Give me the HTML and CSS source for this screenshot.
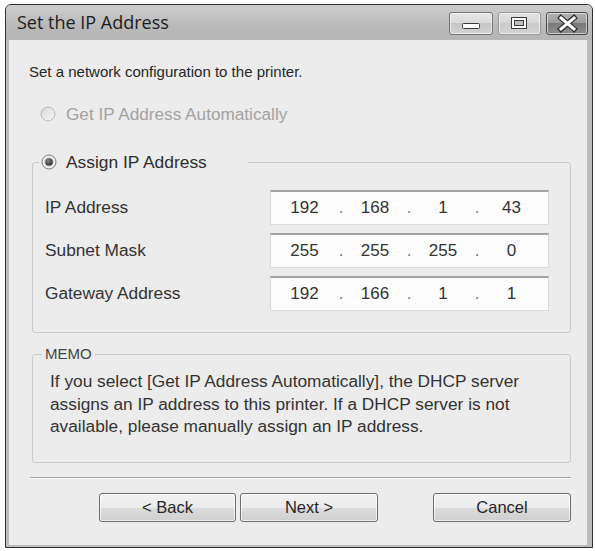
FILE: index.html
```html
<!DOCTYPE html>
<html>
<head>
<meta charset="utf-8">
<link rel="stylesheet" href="styles.css">
</head>
<body>
<div class="window">
  <div class="titlebar">
    <span class="title">Set the IP Address</span>
    <div class="caption">
      <div class="cbtn">
        <svg width="42" height="21" viewBox="0 0 42 21"><rect x="12.5" y="10.5" width="17" height="5" rx="1" fill="#fff" stroke="#3c3c3c"/></svg>
      </div>
      <div class="cbtn light">
        <svg width="41" height="21" viewBox="0 0 41 21"><rect x="12.5" y="4.5" width="15" height="11" fill="#fff" stroke="#3c3c3c"/><rect x="15.5" y="7.5" width="9" height="5" fill="#bdbdbd" stroke="#3c3c3c"/></svg>
      </div>
      <div class="cbtn close">
        <svg width="40" height="21" viewBox="0 0 40 21"><path d="M14 5 L27 16 M27 5 L14 16" stroke="#2e2e2e" stroke-width="5.5" stroke-linecap="square"/><path d="M14 5 L27 16 M27 5 L14 16" stroke="#fff" stroke-width="3" stroke-linecap="square"/></svg>
      </div>
    </div>
  </div>
  <div class="client">
    <div class="intro">Set a network configuration to the printer.</div>
    <div class="radio-row disabled">
      <svg class="radio" width="16" height="16" viewBox="0 0 16 16"><defs><linearGradient id="rd" x1="0" y1="0" x2="1" y2="1"><stop offset="0" stop-color="#d9d9d9"/><stop offset="1" stop-color="#f5f5f5"/></linearGradient></defs><circle cx="8" cy="8" r="7" fill="url(#rd)" stroke="#b9b9b9"/></svg>
      <span>Get IP Address Automatically</span>
    </div>
    <fieldset class="group">
      <legend class="group-legend">
        <svg class="radio" width="16" height="16" viewBox="0 0 16 16"><defs><radialGradient id="dot" cx="0.4" cy="0.35" r="0.7"><stop offset="0" stop-color="#8a8a8a"/><stop offset="1" stop-color="#262626"/></radialGradient></defs><circle cx="8" cy="8" r="7" fill="#f2f2f2" stroke="#7d7d7d"/><circle cx="8" cy="8" r="4.6" fill="#b5b5b5"/><circle cx="8" cy="8" r="3.6" fill="url(#dot)"/></svg>
        <span>Assign IP Address</span>
      </legend>
      <div class="rows">
        <div class="row">
          <span class="label">IP Address</span>
          <div class="ip"><span class="s1">192</span><span class="dot">.</span><span class="s">168</span><span class="dot">.</span><span class="s">1</span><span class="dot">.</span><span class="s4">43</span></div>
        </div>
        <div class="row">
          <span class="label">Subnet Mask</span>
          <div class="ip"><span class="s1">255</span><span class="dot">.</span><span class="s">255</span><span class="dot">.</span><span class="s">255</span><span class="dot">.</span><span class="s4">0</span></div>
        </div>
        <div class="row">
          <span class="label">Gateway Address</span>
          <div class="ip"><span class="s1">192</span><span class="dot">.</span><span class="s">166</span><span class="dot">.</span><span class="s">1</span><span class="dot">.</span><span class="s4">1</span></div>
        </div>
      </div>
    </fieldset>
    <fieldset class="memo">
      <legend class="memo-legend">MEMO</legend>
      <p class="memo-text">If you select [Get IP Address Automatically], the DHCP server<br>assigns an IP address to this printer. If a DHCP server is not<br>available, please manually assign an IP address.</p>
    </fieldset>
    <div class="separator"></div>
    <div class="buttons">
      <button class="btn back">&lt; Back</button>
      <button class="btn next">Next &gt;</button>
      <button class="btn cancel">Cancel</button>
    </div>
  </div>
</div>
</body>
</html>
```
FILE: styles.css
```css
* { box-sizing: border-box; }

body {
  margin: 0;
  background: #ffffff;
  font-family: "Liberation Sans", Arial, sans-serif;
  color: #2e2e2e;
}

.window {
  margin: 4px 0 0 5px;
  width: 588px;
  height: 544px;
  border: 1px solid #2f2f2f;
  border-radius: 6px 6px 0 0;
  background: #bdbdbd;
  display: flex;
  flex-direction: column;
}

.titlebar {
  height: 35px;
  flex-shrink: 0;
  display: flex;
  align-items: flex-start;
  background: linear-gradient(#cdcdcd, #b9b9b9 60%, #b6b6b6);
  border-radius: 5px 5px 0 0;
}

.title {
  font-family: "Open Sans", sans-serif;
  font-size: 18px;
  line-height: 24px;
  margin: 5px 0 0 11px;
  color: #1c1c1c;
}

.caption {
  margin: 7px 4px 0 auto;
  display: flex;
  gap: 5px;
}

.cbtn {
  width: 44px;
  height: 23px;
  border: 1px solid #747474;
  border-radius: 3px;
  background: linear-gradient(#e6e6e6, #d9d9d9 50%, #c6c6c6 50%, #d2d2d2);
  box-shadow: inset 0 0 0 1px rgba(255,255,255,0.55);
}

.cbtn svg { display: block; }

.cbtn.light {
  width: 43px;
  border-color: #9a9a9a;
  background: linear-gradient(#e2e2e2, #d6d6d6 50%, #cbcbcb 50%, #d3d3d3);
}

.cbtn.close {
  width: 42px;
  border-color: #4a4a4a;
  background: linear-gradient(#b2b2b2, #9a9a9a 50%, #7a7a7a 50%, #8e8e8e);
}

.client {
  flex: 1;
  margin: 0 5px 2px 3px;
  background: #ececec;
  display: flex;
  flex-direction: column;
}

.intro {
  font-size: 15px;
  line-height: 18px;
  margin: 23px 0 0 20px;
  color: #262626;
}

.radio-row {
  display: flex;
  align-items: center;
  gap: 10px;
  height: 18px;
  margin: 24px 0 0 31px;
  font-size: 17.2px;
}

.radio { display: block; flex-shrink: 0; }

.disabled { color: #a2a2a2; }

.group {
  margin: 29px 0 0 23px;
  width: 539px;
  border: 1px solid #c9c9c9;
  border-radius: 3px;
  padding: 0 21px 21px 12px;
  min-width: 0;
}

.group-legend {
  display: flex;
  align-items: center;
  gap: 9px;
  height: 20px;
  width: 209px;
  padding: 0 0 0 2px;
  margin-left: -6px;
  font-size: 17.4px;
  color: #2e2e2e;
}

.rows {
  display: flex;
  flex-direction: column;
  gap: 8px;
  padding-top: 18px;
}

.row {
  display: flex;
  align-items: center;
  height: 35px;
}

.label {
  width: 225px;
  font-size: 17.3px;
  color: #333;
}

.ip {
  width: 279px;
  height: 35px;
  border: 1px solid #dadada;
  border-top: 2px solid #a3a3a3;
  background: #fcfcfc;
  display: flex;
  align-items: center;
  font-size: 17px;
  color: #333;
}

.ip span { text-align: center; }
.ip .s1 { width: 67px; }
.ip .s { width: 62px; }
.ip .s4 { width: 63px; }
.ip .dot { width: 6px; color: #777; }

.memo {
  margin: 11px 0 0 23px;
  width: 539px;
  border: 1px solid #c9c9c9;
  border-radius: 3px;
  padding: 6px 10px 24px 17px;
  min-width: 0;
}

.memo-legend {
  height: 20px;
  line-height: 20px;
  padding: 0 3px;
  margin-left: -8px;
  font-size: 15px;
  color: #444;
}

.memo-text {
  margin: 0;
  font-size: 17.3px;
  line-height: 22.5px;
  color: #333;
  white-space: nowrap;
}

.separator {
  margin: 14px 0 0 21px;
  width: 541px;
  height: 2px;
  border-top: 1px solid #a2a2a2;
  border-bottom: 1px solid #fbfbfb;
}

.buttons {
  display: flex;
  margin-top: 14px;
  padding-left: 90px;
}

.btn {
  height: 29px;
  width: 138px;
  border: 1px solid #6e6e6e;
  border-radius: 3px;
  background: linear-gradient(#f3f3f3, #ebebeb 50%, #dcdcdc 50%, #cfcfcf);
  box-shadow: inset 0 0 0 1px rgba(255,255,255,0.7);
  font-family: "Liberation Sans", Arial, sans-serif;
  font-size: 16.5px;
  color: #262626;
  padding: 0;
}

.btn.back { width: 137px; margin-right: 4px; }
.btn.cancel { margin-left: 55px; }
```
